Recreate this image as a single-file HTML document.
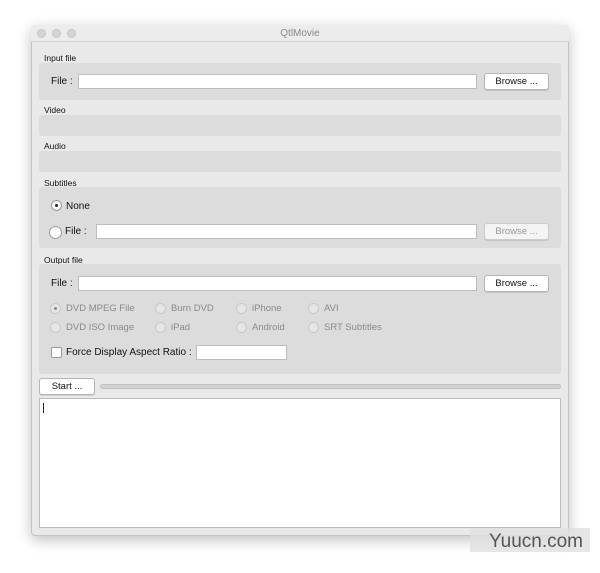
<!DOCTYPE html><html><head><style>
*{margin:0;padding:0;box-sizing:border-box}
body{width:600px;height:573px;background:#fff;position:relative;overflow:hidden;font-family:"Liberation Sans",sans-serif;font-size:10px;color:#111}
.a{position:absolute}
.win{left:31px;top:25px;width:538px;height:511px;background:#e9e9e9;border:1px solid #c4c4c4;border-radius:4px;box-shadow:0 4px 14px rgba(0,0,0,.25)}
.tb{left:31px;top:25px;width:538px;height:17px;background:#ececec;border-bottom:1px solid #d2d2d2;border-radius:4px 4px 0 0;text-align:center;font-size:10px;color:#888;line-height:17px}
.dot{width:9px;height:9px;border-radius:50%;background:#d4d4d4;border:1px solid #c6c6c6;top:29px}
.grp{background:#dcdcdc;border-radius:3px;left:39px;width:522px}
.lbl{font-size:8.5px;left:44px}
.tf{background:#fff;border:1px solid #bdbdbd;height:15px}
.btn{background:#fff;border:1px solid #b5b5b5;border-radius:3px;height:17px;text-align:center;line-height:15px;font-size:9.5px;box-shadow:0 1px 0 rgba(0,0,0,.1)}
.rd{width:11px;height:11px;border-radius:50%;background:#fff;border:1px solid #999}
.dr{width:11px;height:11px;border-radius:50%;background:#e6e6e6;border:1px solid #c8c8c8}
.g{color:#8a8a8a;font-size:9.5px}
</style></head><body>
<div class="a win"></div>
<div class="a tb">QtlMovie</div>
<div class="a dot" style="left:37px"></div><div class="a dot" style="left:52px"></div><div class="a dot" style="left:67px"></div>

<div class="a lbl" style="top:53px">Input file</div>
<div class="a grp" style="top:63px;height:37px"></div>
<div class="a" style="left:51px;top:76px">File :</div>
<div class="a tf" style="left:78px;top:74px;width:399px"></div>
<div class="a btn" style="left:484px;top:73px;width:65px">Browse ...</div>

<div class="a lbl" style="top:105px">Video</div>
<div class="a grp" style="top:115px;height:21px"></div>
<div class="a lbl" style="top:141px">Audio</div>
<div class="a grp" style="top:151px;height:21px"></div>
<div class="a lbl" style="top:178px">Subtitles</div>
<div class="a grp" style="top:187px;height:61px"></div>
<div class="a rd" style="left:51px;top:200px"><div class="a" style="left:3px;top:3px;width:3px;height:3px;border-radius:50%;background:#222"></div></div>
<div class="a" style="left:66px;top:201px">None</div>
<div class="a rd" style="left:49px;top:226px;width:13px;height:13px"></div>
<div class="a" style="left:65px;top:226px">File :</div>
<div class="a tf" style="left:96px;top:224px;width:381px"></div>
<div class="a btn" style="left:484px;top:223px;width:65px;color:#999;border-color:#ccc;background:#f4f4f4">Browse ...</div>

<div class="a lbl" style="top:255px">Output file</div>
<div class="a grp" style="top:264px;height:110px"></div>
<div class="a" style="left:51px;top:278px">File :</div>
<div class="a tf" style="left:78px;top:276px;width:399px"></div>
<div class="a btn" style="left:484px;top:275px;width:65px">Browse ...</div>

<div class="a dr" style="left:50px;top:303px"><div class="a" style="left:3px;top:3px;width:3px;height:3px;border-radius:50%;background:#888"></div></div>
<div class="a g" style="left:66px;top:303px">DVD MPEG File</div>
<div class="a dr" style="left:155px;top:303px"></div><div class="a g" style="left:171px;top:303px">Burn DVD</div>
<div class="a dr" style="left:236px;top:303px"></div><div class="a g" style="left:252px;top:303px">iPhone</div>
<div class="a dr" style="left:308px;top:303px"></div><div class="a g" style="left:324px;top:303px">AVI</div>
<div class="a dr" style="left:50px;top:322px"></div><div class="a g" style="left:66px;top:322px">DVD ISO Image</div>
<div class="a dr" style="left:155px;top:322px"></div><div class="a g" style="left:171px;top:322px">iPad</div>
<div class="a dr" style="left:236px;top:322px"></div><div class="a g" style="left:252px;top:322px">Android</div>
<div class="a dr" style="left:308px;top:322px"></div><div class="a g" style="left:324px;top:322px">SRT Subtitles</div>
<div class="a" style="left:51px;top:347px;width:11px;height:11px;background:#fff;border:1px solid #999;border-radius:2px"></div>
<div class="a" style="left:66px;top:347px">Force Display Aspect Ratio :</div>
<div class="a tf" style="left:196px;top:345px;width:91px"></div>

<div class="a btn" style="left:39px;top:378px;width:56px">Start ...</div>
<div class="a" style="left:100px;top:384px;width:461px;height:5px;background:#d2d2d2;border:1px solid #c2c2c2;border-radius:3px"></div>
<div class="a" style="left:39px;top:398px;width:522px;height:130px;background:#fff;border:1px solid #bcbcbc"></div>
<div class="a" style="left:43px;top:403px;width:1px;height:10px;background:#222"></div>

<div class="a" style="left:470px;top:528px;width:120px;height:24px;background:#e0e0e0;opacity:.8"></div>
<div class="a" style="left:489px;top:531px;font-size:19px;color:#555">Yuucn.com</div>
</body></html>
